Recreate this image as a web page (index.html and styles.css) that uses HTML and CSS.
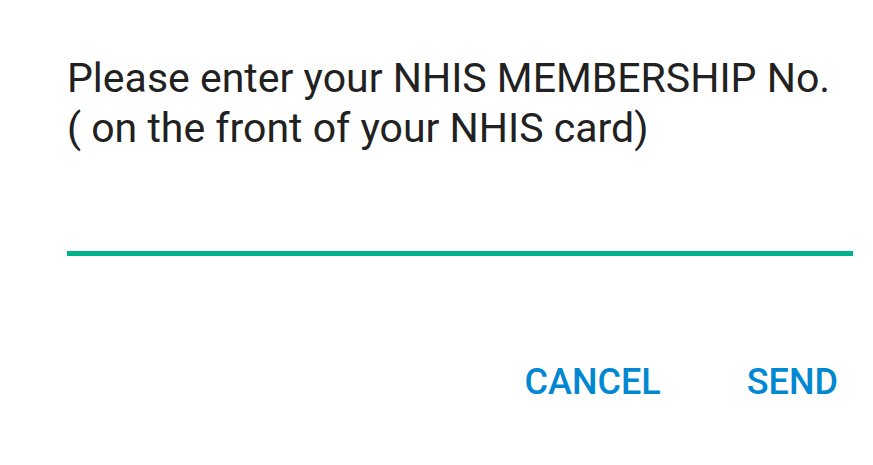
FILE: index.html
```html
<!DOCTYPE html>
<html lang="en">
<head>
  <meta charset="UTF-8">
  <meta name="viewport" content="width=device-width, initial-scale=1">
  <title>NHIS Membership</title>
  <link rel="stylesheet" href="styles.css">
</head>
<body>
  <div class="dialog">
    <p class="message">Please enter your NHIS MEMBERSHIP No.<br>( on the front of your NHIS card)</p>
    <input type="text" class="field" aria-label="NHIS membership number">
    <div class="actions">
      <button type="button" class="action">CANCEL</button>
      <button type="button" class="action">SEND</button>
    </div>
  </div>
</body>
</html>
```

FILE: styles.css
```css
body {
  margin: 0;
  background: #fff;
  font-family: Roboto, "Noto Sans", sans-serif;
}

.dialog {
  padding: 53px 20px 0 67px;
  width: 786px;
}

.message {
  margin: 0;
  font-size: 41px;
  line-height: 50px;
  color: #212121;
}

.field {
  display: block;
  width: 100%;
  box-sizing: border-box;
  margin-top: 63px;
  height: 40px;
  padding: 0;
  border: none;
  border-bottom: 5px solid #00b18b;
  outline: none;
  background: transparent;
}

.actions {
  display: flex;
  justify-content: flex-end;
  gap: 86px;
  margin-top: 105px;
  padding-right: 15px;
}

.action {
  padding: 0;
  border: none;
  background: none;
  font-family: Roboto, sans-serif;
  font-weight: 500;
  font-size: 36px;
  color: #0288d1;
  cursor: pointer;
}
```
